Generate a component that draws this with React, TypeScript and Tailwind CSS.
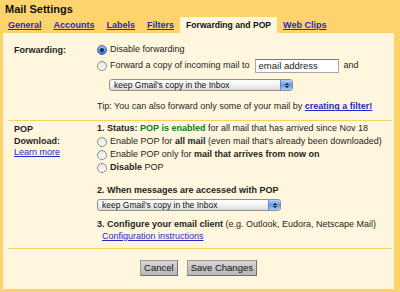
import React from "react";

function Radio({ checked = false }: { checked?: boolean }) {
  return checked ? (
    <span className="mr-[3px] flex h-[10px] w-[10px] shrink-0 items-center justify-center rounded-full border border-[#3b64a8] bg-gradient-to-b from-[#9cc4f2] to-[#2f75d6]">
      <span className="h-[4px] w-[4px] rounded-full bg-[#1c2b48]" />
    </span>
  ) : (
    <span className="mr-[3px] h-[10px] w-[10px] shrink-0 rounded-full border border-[#8a8a8a] bg-gradient-to-b from-[#e6e6e6] to-white" />
  );
}

function Select({ width }: { width: string }) {
  return (
    <div
      className={`flex h-[12px] items-stretch rounded-[3px] border border-[#8f8f8f] bg-gradient-to-b from-white via-[#f2f2f2] to-[#dcdcdc] ${width}`}
    >
      <span className="flex-1 truncate pl-[4px] text-[8.5px] leading-[10px] text-[#111]">
        keep Gmail's copy in the Inbox
      </span>
      <span className="flex w-[12px] flex-col items-center justify-center gap-[1px] rounded-r-[2px] border-l border-[#6b87b8] bg-gradient-to-b from-[#b9d5f7] via-[#5d98e4] to-[#a9cdf6]">
        <span className="h-0 w-0 border-x-[2px] border-b-[2px] border-x-transparent border-b-[#111]" />
        <span className="h-0 w-0 border-x-[2px] border-t-[2px] border-x-transparent border-t-[#111]" />
      </span>
    </div>
  );
}

function Button({ children }: { children: React.ReactNode }) {
  return (
    <button className="h-[16px] border border-[#6f6f6f] border-t-[#9a9a9a] border-l-[#9a9a9a] bg-gradient-to-b from-[#d6d6d6] to-[#b8b8b8] px-[3px] text-[9.5px] leading-[14px] text-[#111]">
      {children}
    </button>
  );
}

const link = "font-bold text-[#2626c9] underline";

export default function App() {
  return (
    <div className="h-[292px] w-[400px] overflow-hidden bg-[#fdd46c] font-['Liberation_Sans',Arial,sans-serif] text-[9px] text-[#1e1e1e]">
      <div className="flex h-[17px] items-center pl-[5px] pt-[2px] text-[11px] font-bold text-[#111]">
        Mail Settings
      </div>
      <div className="ml-[2px] flex h-[16px] items-stretch text-[9px] leading-[16px]">
        <a className="px-[6px] font-bold text-[#2626c9] underline">General</a>
        <a className="px-[6px] font-bold text-[#2626c9] underline">Accounts</a>
        <a className="px-[6px] font-bold text-[#2626c9] underline">Labels</a>
        <a className="px-[6px] font-bold text-[#2626c9] underline">Filters</a>
        <span className="ml-[0px] bg-[#fff7dd] px-[6px] text-[8.6px] font-bold text-[#111]">
          Forwarding and POP
        </span>
        <a className="px-[6px] font-bold text-[#2626c9] underline">Web Clips</a>
      </div>

      <div className="ml-[3px] flex h-[256px] w-[391px] flex-col bg-[#fff7dd]">
        {/* Forwarding */}
        <div className="flex pl-[11px] pt-[10px]">
          <div className="w-[83px] pt-[2px] font-bold leading-[11px]">Forwarding:</div>
          <div className="flex flex-col">
            <div className="flex h-[14px] items-center">
              <Radio checked />
              <span>Disable forwarding</span>
            </div>
            <div className="mt-[1px] flex h-[16px] items-center">
              <Radio />
              <span>Forward a copy of incoming mail to</span>
              <span className="ml-[5px] flex h-[14px] w-[84px] items-center border border-[#a7a7a7] border-t-[#7a7a7a] bg-white pl-[3px] text-[9.5px]">
                email address
              </span>
              <span className="ml-[5px]">and</span>
            </div>
            <div className="mt-[4px] flex h-[14px] items-center pl-[12px]">
              <Select width="w-[184px]" />
            </div>
            <div className="mt-[8px] flex h-[14px] items-center whitespace-nowrap">
              Tip: You can also forward only some of your mail by&nbsp;
              <a className={link}>creating a filter!</a>
            </div>
          </div>
        </div>

        <div className="ml-[5px] mr-[2px] mt-[6px] h-[1px] bg-[#fccf5e]" />

        {/* POP */}
        <div className="flex pl-[11px] pt-[2px]">
          <div className="w-[83px] pt-[1px] leading-[11.5px]">
            <div className="font-bold">POP</div>
            <div className="font-bold">Download:</div>
            <a className="text-[#2626c9] underline">Learn more</a>
          </div>
          <div className="flex flex-col whitespace-nowrap">
            <div className="flex h-[12px] items-center">
              <b>1. Status:</b>&nbsp;<b className="text-[#0b7f1c]">POP is enabled</b>&nbsp;for all mail that has
              arrived since Nov 18
            </div>
            <div className="flex h-[13px] items-center">
              <Radio />
              <span>
                Enable POP for <b>all mail</b> (even mail that's already been downloaded)
              </span>
            </div>
            <div className="flex h-[13px] items-center">
              <Radio />
              <span>
                Enable POP only for <b>mail that arrives from now on</b>
              </span>
            </div>
            <div className="flex h-[13px] items-center">
              <Radio />
              <span>
                <b>Disable</b> POP
              </span>
            </div>
            <div className="mt-[11px] flex h-[12px] items-center font-bold">
              2. When messages are accessed with POP
            </div>
            <div className="mt-[2px] flex h-[12px] items-center">
              <Select width="w-[184px]" />
            </div>
            <div className="mt-[8px] flex h-[12px] items-center">
              <b>3. Configure your email client</b>&nbsp;(e.g. Outlook, Eudora, Netscape Mail)
            </div>
            <div className="flex h-[11px] items-center pl-[5px]">
              <a className="text-[#2626c9] underline">Configuration instructions</a>
            </div>
          </div>
        </div>

        <div className="ml-[5px] mr-[2px] mt-[6px] h-[1px] bg-[#fccf5e]" />

        <div className="mt-[11px] flex justify-center gap-[9px]">
          <Button>Cancel</Button>
          <Button>Save Changes</Button>
        </div>
      </div>
    </div>
  );
}
